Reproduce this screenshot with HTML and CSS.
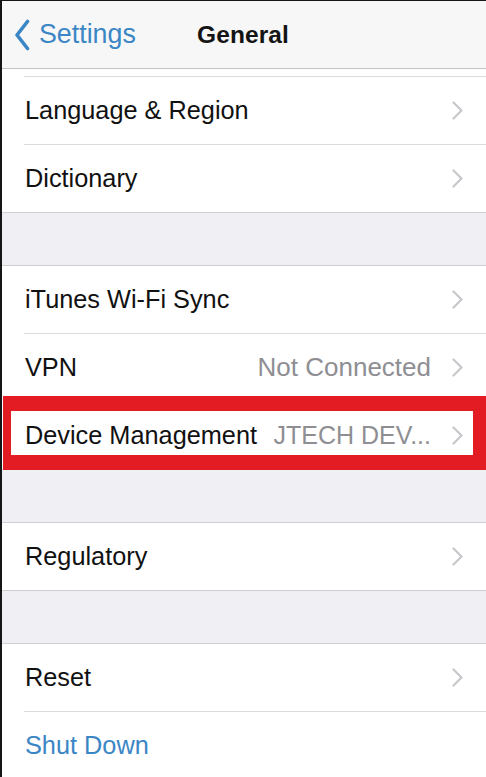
FILE: index.html
```html
<!DOCTYPE html>
<html lang="en">
<head>
<meta charset="utf-8">
<title>General</title>
<link rel="stylesheet" href="styles.css">
</head>
<body>
<div class="screen">
  <header class="nav">
    <a class="back">
      <svg class="back-chevron" width="16" height="32" viewBox="0 0 16 32"><path d="M13.5 2.5 L3 16 L13.5 29.5" fill="none" stroke="#3b86c5" stroke-width="3.6" stroke-linecap="round" stroke-linejoin="round"/></svg>
      <span>Settings</span>
    </a>
    <h1 class="title">General</h1>
  </header>

  <section class="group group-first">
    <div class="partial"></div>
    <div class="row"><span class="label">Language &amp; Region</span><span class="chev"></span></div>
    <div class="row last"><span class="label">Dictionary</span><span class="chev"></span></div>
  </section>

  <div class="gap"></div>

  <section class="group">
    <div class="row"><span class="label">iTunes Wi-Fi Sync</span><span class="chev"></span></div>
    <div class="row"><span class="label">VPN</span><span class="value">Not Connected</span><span class="chev"></span></div>
    <div class="row last highlighted"><span class="label">Device Management</span><span class="value value-trunc">JTECH DEV...</span><span class="chev"></span><div class="annotation"></div></div>
  </section>

  <div class="gap"></div>

  <section class="group">
    <div class="row last"><span class="label">Regulatory</span><span class="chev"></span></div>
  </section>

  <div class="gap"></div>

  <section class="group">
    <div class="row"><span class="label">Reset</span><span class="chev"></span></div>
    <div class="row last"><span class="label action">Shut Down</span></div>
  </section>
</div>
</body>
</html>
```

FILE: styles.css
```css
html, body {
  margin: 0;
  padding: 0;
}
body {
  width: 486px;
  height: 777px;
  overflow: hidden;
  background: #efeff4;
  font-family: "Liberation Sans", Arial, sans-serif;
}
.screen {
  height: 777px;
  box-sizing: border-box;
  border-top: 1px solid #151515;
  border-left: 2px solid #151515;
  background: #efeff4;
  display: flex;
  flex-direction: column;
}
.nav {
  height: 67px;
  flex: 0 0 67px;
  background: #f7f7f8;
  border-bottom: 1px solid #c4c4c8;
  position: relative;
  display: flex;
  align-items: center;
  justify-content: center;
}
.back {
  position: absolute;
  left: 12px;
  top: 0;
  bottom: 0;
  display: flex;
  align-items: center;
  gap: 9px;
  color: #3b86c5;
  font-size: 26.8px;
}
.back-chevron {
  display: block;
}
.title {
  margin: 0 0 0 -2px;
  font-size: 24.5px;
  font-weight: 700;
  color: #141414;
  letter-spacing: 0.1px;
}
.group {
  background: #fff;
  border-top: 1px solid #d0d0d4;
  border-bottom: 1px solid #d0d0d4;
  display: flex;
  flex-direction: column;
}
.group-first {
  border-top: 0;
}
.partial {
  height: 7px;
  border-bottom: 1px solid #dcdce0;
  margin-left: 22px;
}
.gap {
  flex: 0 0 52px;
  height: 52px;
}
.row {
  height: 67px;
  flex: 0 0 67px;
  display: flex;
  align-items: center;
  padding: 0 23px 0 23px;
  position: relative;
  font-size: 25.3px;
  color: #111;
}
.row::after {
  content: "";
  position: absolute;
  left: 22px;
  right: 0;
  bottom: -1px;
  height: 1px;
  background: #dcdce0;
}
.row.last::after {
  display: none;
}
.row:not(.last) {
  margin-bottom: 1px;
}
.label {
  flex: 1 1 auto;
  white-space: nowrap;
}
.value {
  color: #8e8e93;
  font-size: 26px;
  margin-right: 21px;
  white-space: nowrap;
}
.value-trunc {
  font-size: 25px;
}
.chev {
  width: 11px;
  height: 19px;
  flex: 0 0 11px;
  background: no-repeat center / 11px 19px url("data:image/svg+xml;utf8,<svg xmlns='http://www.w3.org/2000/svg' width='11' height='19' viewBox='0 0 11 19'><path d='M1.5 1.5 L9.5 9.5 L1.5 17.5' fill='none' stroke='%23c7c7cc' stroke-width='2.2' stroke-linecap='round' stroke-linejoin='round'/></svg>");
}
.action {
  color: #3b86c5;
}
.annotation {
  position: absolute;
  top: -6px;
  bottom: -1px;
  left: 1px;
  right: 0;
  border-style: solid;
  border-color: #e31b23;
  border-width: 15px 13px 15px 8px;
  box-sizing: border-box;
}
```
